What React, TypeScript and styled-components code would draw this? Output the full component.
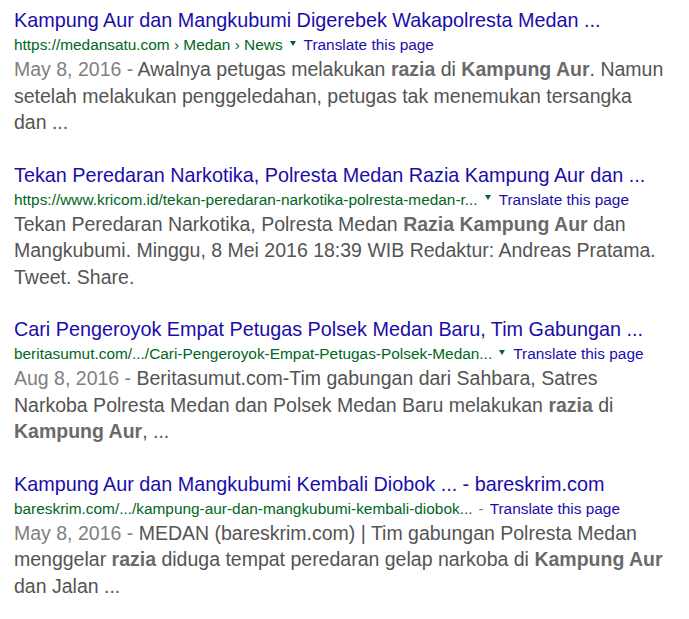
import React, { FC } from "react"
import styled, { createGlobalStyle } from "styled-components"

const GlobalStyle = createGlobalStyle`
    body {
        margin: 0;
        background: #fff;
        font-family: "Liberation Sans", Arial, sans-serif;
    }
`

const ResultList = styled.div`
    display: flex;
    flex-direction: column;
    gap: 26px;
    padding: 7px 0 0 14px;
`

const Result = styled.div`
    display: flex;
    flex-direction: column;
`

const Title = styled.a`
    color: #1a0dab;
    font-size: 19.8px;
    line-height: 26px;
    text-decoration: none;
    white-space: nowrap;
`

const UrlRow = styled.div`
    display: flex;
    align-items: center;
    font-size: 15.4px;
    line-height: 23px;
    white-space: nowrap;
`

const Cite = styled.cite`
    color: #006621;
    font-style: normal;
`

const Arrow = styled.span`
    display: inline-block;
    width: 0;
    height: 0;
    margin: 0 8px 3px 7px;
    border-left: 3px solid transparent;
    border-right: 3px solid transparent;
    border-top: 5px solid #006621;
`

const Dash = styled.span`
    color: #808080;
    margin: 0 6px;
`

const Translate = styled.a`
    color: #1a0dab;
    text-decoration: none;
`

const Snippet = styled.div`
    color: #545454;
    font-size: 19.5px;
    line-height: 26.5px;
    max-width: 654px;
`

const Date = styled.span`
    color: #808080;
`

const Em = styled.b`
    color: #6a6a6a;
`

interface ResultData {
    title: string
    url: string
    dash?: boolean
    snippet: React.ReactNode
}

const results: ResultData[] = [
    {
        title: "Kampung Aur dan Mangkubumi Digerebek Wakapolresta Medan ...",
        url: "https://medansatu.com › Medan › News",
        snippet: (
            <>
                <Date>May 8, 2016 - </Date>Awalnya petugas melakukan <Em>razia</Em> di <Em>Kampung Aur</Em>. Namun
                setelah melakukan penggeledahan, petugas tak menemukan tersangka dan ...
            </>
        ),
    },
    {
        title: "Tekan Peredaran Narkotika, Polresta Medan Razia Kampung Aur dan ...",
        url: "https://www.kricom.id/tekan-peredaran-narkotika-polresta-medan-r...",
        snippet: (
            <>
                Tekan Peredaran Narkotika, Polresta Medan <Em>Razia Kampung Aur</Em> dan Mangkubumi. Minggu, 8 Mei
                2016 18:39 WIB Redaktur: Andreas Pratama. Tweet. Share.
            </>
        ),
    },
    {
        title: "Cari Pengeroyok Empat Petugas Polsek Medan Baru, Tim Gabungan ...",
        url: "beritasumut.com/.../Cari-Pengeroyok-Empat-Petugas-Polsek-Medan...",
        snippet: (
            <>
                <Date>Aug 8, 2016 - </Date>Beritasumut.com-Tim gabungan dari Sahbara, Satres Narkoba Polresta Medan
                dan Polsek Medan Baru melakukan <Em>razia</Em> di <Em>Kampung Aur</Em>, ...
            </>
        ),
    },
    {
        title: "Kampung Aur dan Mangkubumi Kembali Diobok ... - bareskrim.com",
        url: "bareskrim.com/.../kampung-aur-dan-mangkubumi-kembali-diobok...",
        dash: true,
        snippet: (
            <>
                <Date>May 8, 2016 - </Date>MEDAN (bareskrim.com) | Tim gabungan Polresta Medan menggelar{" "}
                <Em>razia</Em> diduga tempat peredaran gelap narkoba di <Em>Kampung Aur</Em> dan Jalan ...
            </>
        ),
    },
]

const App: FC = () => {
    return (
        <>
            <GlobalStyle />
            <ResultList>
                {results.map((r) => (
                    <Result key={r.title}>
                        <Title href="#">{r.title}</Title>
                        <UrlRow>
                            <Cite>{r.url}</Cite>
                            {r.dash ? <Dash>-</Dash> : <Arrow />}
                            <Translate href="#">Translate this page</Translate>
                        </UrlRow>
                        <Snippet>{r.snippet}</Snippet>
                    </Result>
                ))}
            </ResultList>
        </>
    )
}

export default App
